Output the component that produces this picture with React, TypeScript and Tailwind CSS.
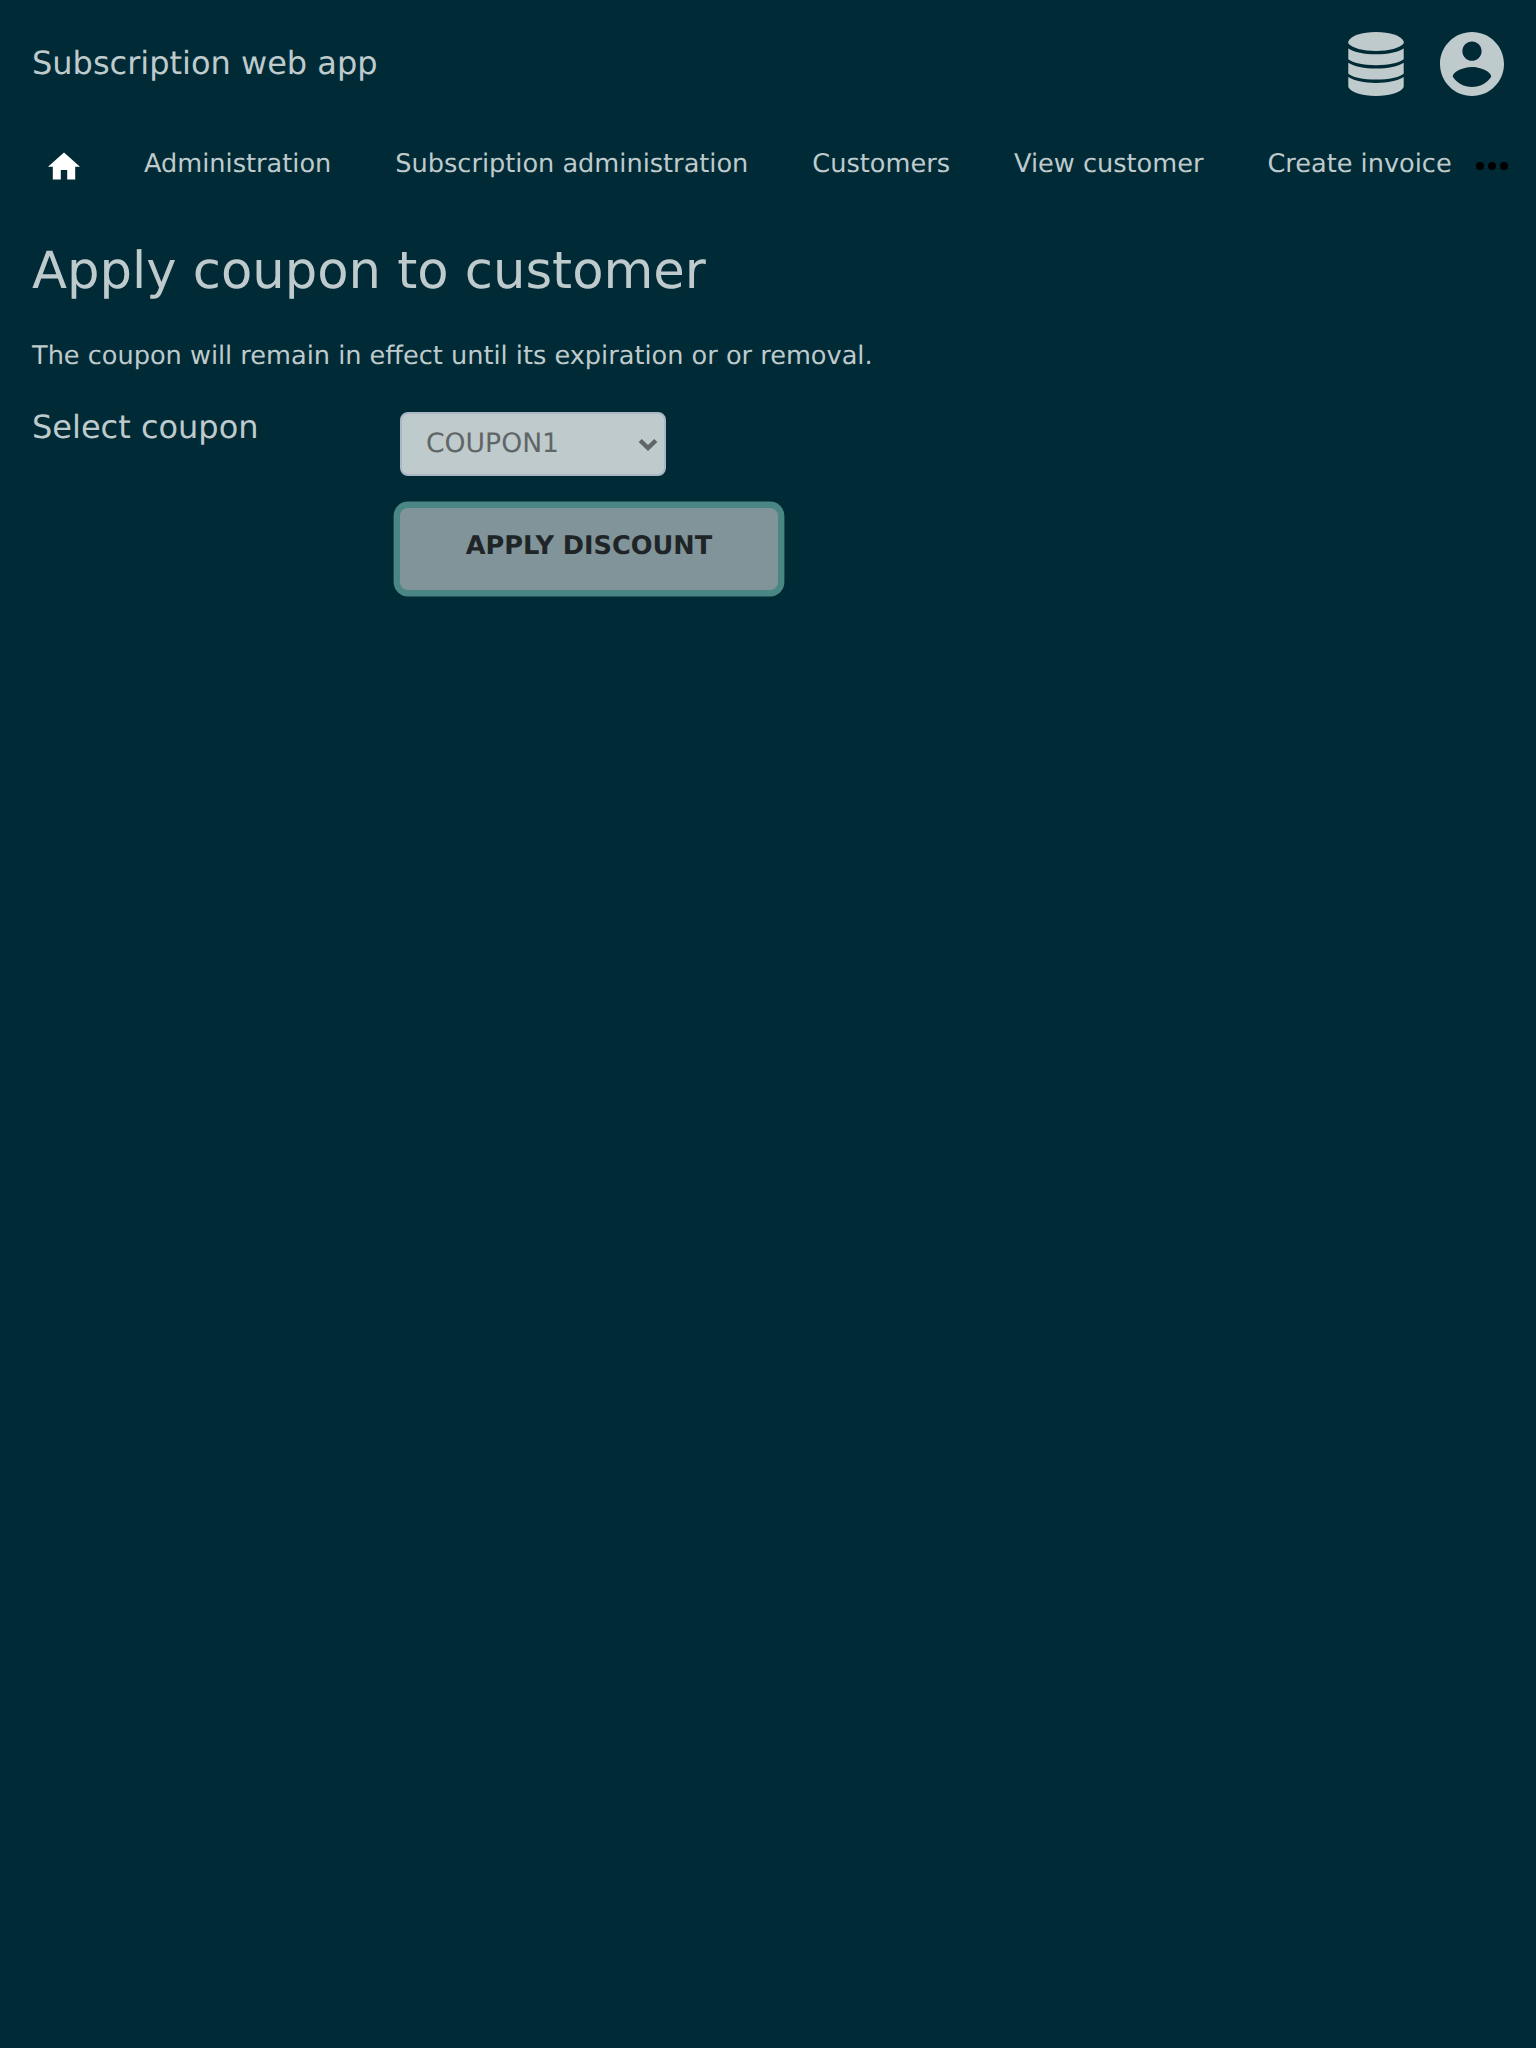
import React from "react";

const navItems = [
  "Administration",
  "Subscription administration",
  "Customers",
  "View customer",
  "Create invoice",
];

function DatabaseIcon() {
  return (
    <svg viewBox="0 0 56 64" className="h-16 w-14" fill="currentColor" aria-hidden="true">
      <path d="M.3 11.500V9.500C3 3.500 14 0 28 0s25 3.500 27.700 9.500v2C52 16 41 19 28 19S4 16 .3 11.500z" />
      <path d="M.3 16.500C6 20.200 16 22.300 28 22.300s22-2.100 27.700-5.800V27.300C51 31 41 33.200 28 33.200S5 31 .3 27.300z" />
      <path d="M.3 30.800C6 34.500 16 36.600 28 36.600s22-2.100 27.700-5.800V41.700C51 45.400 41 47.600 28 47.600S5 45.400 .3 41.700z" />
      <path d="M.3 45.100C6 48.800 16 50.900 28 50.900s22-2.100 27.700-5.800V55C53 60.500 42 64 28 64S3 60.500 .3 55z" />
    </svg>
  );
}

function AccountIcon() {
  return (
    <svg viewBox="2 2 20 20" className="h-16 w-16" fill="currentColor" aria-hidden="true">
      <path d="M12 2C6.480 2 2 6.480 2 12s4.480 10 10 10 10-4.480 10-10S17.520 2 12 2zm0 3c1.660 0 3 1.340 3 3s-1.340 3-3 3-3-1.340-3-3 1.340-3 3-3zm0 14.200c-2.500 0-4.710-1.280-6-3.220.03-1.990 4-3.080 6-3.080 1.990 0 5.970 1.090 6 3.080-1.290 1.940-3.500 3.220-6 3.220z" />
    </svg>
  );
}

export default function App() {
  return (
    <div className="min-h-[2048px] w-[1536px] overflow-hidden bg-[#002b36] font-['DejaVu_Sans',sans-serif] text-[25.600px] text-[#bfcacc] [text-rendering:geometricPrecision]">
      <header className="flex h-32 items-center justify-between px-8">
        <span className="pb-0.5 text-[32px] leading-[40px]">Subscription web app</span>
        <div className="flex items-center gap-9">
          <DatabaseIcon />
          <AccountIcon />
        </div>
      </header>
      <nav className="flex h-[72px] items-center whitespace-nowrap pl-12">
        <a href="#" aria-label="Home" className="mt-1 text-white">
          <svg viewBox="2 2.750 20 17.500" className="h-7 w-8" fill="currentColor" aria-hidden="true">
            <path d="M10 20v-6h4v6h5v-8h3L12 3 2 12h3v8z" />
          </svg>
        </a>
        <div className="ml-16 flex gap-16">
          {navItems.map((item) => (
            <a key={item} href="#" className="leading-[38px]">
              {item}
            </a>
          ))}
        </div>
        <button aria-label="More" className="ml-6 mt-1 text-black">
          <svg viewBox="0 0 32 8" className="h-2 w-8" fill="currentColor" aria-hidden="true">
            <circle cx="4" cy="4" r="4" />
            <circle cx="16" cy="4" r="4" />
            <circle cx="28" cy="4" r="4" />
          </svg>
        </button>
      </nav>
      <main className="px-8 pt-[37px]">
        <h1 className="text-[51.200px] leading-[68px]">Apply coupon to customer</h1>
        <p className="mt-8 leading-[38px]">
          The coupon will remain in effect until its expiration or or removal.
        </p>
        <form className="mt-[37px] grid grid-cols-[368px_auto] justify-start">
          <label className="text-[32px] leading-[30px]">Select coupon</label>
          <button
            type="button"
            className="flex h-16 w-[266px] items-center justify-between rounded-lg border-2 border-[#a9b7c4] bg-[#bfcacc] pl-6 pr-[6px] text-[26.667px] text-[#606566] [text-rendering:geometricPrecision]"
          >
            <span className="leading-[38px]">COUPON1</span>
            <svg viewBox="0 0 20 14" className="mt-0.5 h-[14px] w-5" fill="none" stroke="currentColor" strokeWidth="4.500" aria-hidden="true">
              <path d="M2.200 2.500l7.800 7.500 7.800-7.500" />
            </svg>
          </button>
          <button
            type="button"
            className="col-start-2 mt-8 h-[82px] w-[378px] rounded-lg bg-[#80949a] pb-1.5 font-bold uppercase text-[#1f2527] shadow-[0_0_0_6.400px_#4a8784] [text-rendering:geometricPrecision]"
          >
            Apply discount
          </button>
        </form>
      </main>
    </div>
  );
}
